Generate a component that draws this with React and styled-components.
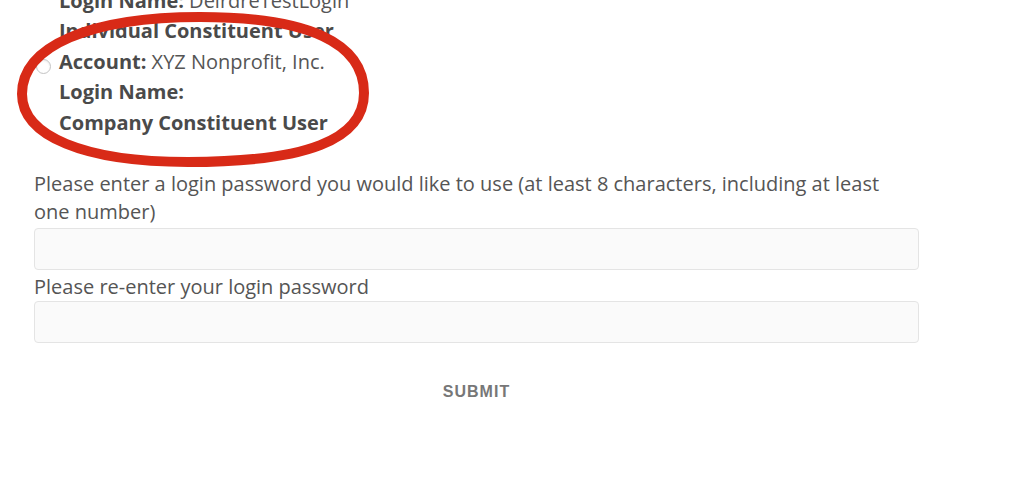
import React from "react";
import styled, { createGlobalStyle } from "styled-components";

const Global = createGlobalStyle`
  html, body { margin: 0; padding: 0; background: #ffffff; overflow: hidden; }
  body { font-family: "Open Sans", "Noto Sans", sans-serif; }
`;

const Page = styled.div`
  position: relative;
  width: 1024px;
  height: 482px;
  overflow: hidden;
  background: #fff;
`;

const Form = styled.form`
  width: 885px;
  margin: -45px 0 0 34px;
  display: flex;
  flex-direction: column;
`;

const OptionList = styled.div`
  display: flex;
  flex-direction: column;
`;

const Option = styled.label`
  display: flex;
  align-items: flex-start;
  gap: 8px;
`;

const Radio = styled.span`
  flex: none;
  width: 13px;
  height: 13px;
  margin: 12px 0 0 2px;
  border-radius: 50%;
  border: 1px solid #c4c4c4;
  background: #fff;
  box-shadow: inset 0 1px 2px rgba(0,0,0,0.08);
`;

const OptionText = styled.div`
  display: flex;
  flex-direction: column;
  font-size: 20px;
  line-height: 30.6px;
  color: #555;
`;

const Line = styled.div`
  white-space: nowrap;
  font-weight: ${(p) => (p.$bold ? 700 : 400)};
  color: ${(p) => (p.$bold ? "#4a4a4a" : "#555")};
`;

const Strong = styled.b`
  font-weight: 700;
  color: #4a4a4a;
`;

const FieldLabel = styled.div`
  font-size: 20px;
  line-height: 28px;
  color: #555;
  margin-top: ${(p) => p.$top || 0}px;
  margin-bottom: ${(p) => p.$bottom || 0}px;
`;

const Input = styled.input`
  box-sizing: border-box;
  width: 100%;
  height: 42px;
  border: 1px solid #e4e4e4;
  border-radius: 4px;
  background: #fafafa;
  margin: 0 0 3px;
  padding: 0 12px;
  outline: none;
`;

const SubmitRow = styled.div`
  display: flex;
  justify-content: center;
  margin-top: 35px;
`;

const SubmitButton = styled.button`
  background: none;
  border: none;
  padding: 0;
  font-family: "Liberation Sans", Arial, sans-serif;
  font-weight: 700;
  font-size: 16px;
  letter-spacing: 1px;
  color: #777;
  line-height: 22px;
  cursor: pointer;
`;

const Annotation = styled.svg`
  position: absolute;
  left: 0;
  top: 0;
  pointer-events: none;
`;

const loop =
  "M 22 94 C 22 46 90 17 200 17 C 309 17 364 43 364 93 C 364 140 306 162 188 162 C 84 162 22 136 22 94 Z";

export default function App() {
  return (
    <Page>
      <Global />
      <Form onSubmit={(e) => e.preventDefault()}>
        <OptionList>
          <Option>
            <Radio />
            <OptionText>
              <Line><Strong>Account:</Strong> Deirdre Test</Line>
              <Line><Strong>Login Name:</Strong> DeirdreTestLogin</Line>
              <Line $bold>Individual Constituent User</Line>
            </OptionText>
          </Option>
          <Option>
            <Radio />
            <OptionText>
              <Line><Strong>Account:</Strong> XYZ Nonprofit, Inc.</Line>
              <Line $bold>Login Name:</Line>
              <Line $bold>Company Constituent User</Line>
            </OptionText>
          </Option>
        </OptionList>
        <FieldLabel $top={31} $bottom={2}>
          Please enter a login password you would like to use (at least 8 characters, including at least one number)
        </FieldLabel>
        <Input type="password" />
        <FieldLabel>Please re-enter your login password</FieldLabel>
        <Input type="password" />
        <SubmitRow>
          <SubmitButton type="submit">SUBMIT</SubmitButton>
        </SubmitRow>
      </Form>
      <Annotation width="1024" height="482" viewBox="0 0 1024 482">
        <path d={loop} fill="none" stroke="#d82a17" strokeWidth="10" />
      </Annotation>
    </Page>
  );
}
